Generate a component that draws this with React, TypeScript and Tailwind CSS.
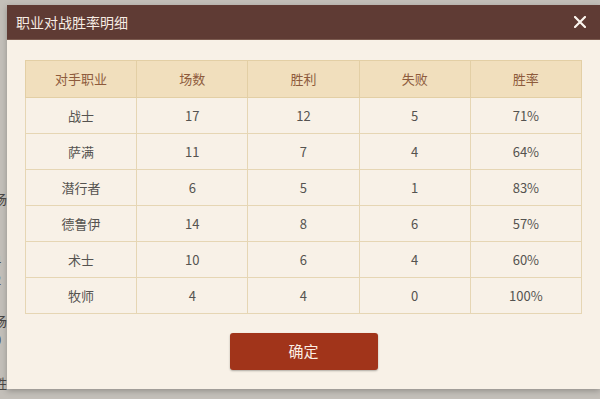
import React from "react";

const rows = [
  { name: "战士", total: 17, win: 12, lose: 5, rate: "71%" },
  { name: "萨满", total: 11, win: 7, lose: 4, rate: "64%" },
  { name: "潜行者", total: 6, win: 5, lose: 1, rate: "83%" },
  { name: "德鲁伊", total: 14, win: 8, lose: 6, rate: "57%" },
  { name: "术士", total: 10, win: 6, lose: 4, rate: "60%" },
  { name: "牧师", total: 4, win: 4, lose: 0, rate: "100%" },
];

const headers = ["对手职业", "场数", "胜利", "失败", "胜率"];

export default function App() {
  return (
    <div
      className="relative w-[600px] h-[399px] overflow-hidden bg-[#c3bfb9]"
      style={{ fontFamily: '"Noto Sans CJK SC", "Noto Sans", sans-serif' }}
    >
      {/* page behind the overlay */}
      <div className="flex flex-col pt-[150px] pl-0 text-[13px] text-[#4a4744] leading-[19px] -ml-[6px]">
        <span>-</span>
        <span className="mt-[20px]">场</span>
        <span>:</span>
        <span className="mt-[24px]">4</span>
        <span>2</span>
        <span className="mt-[22px]">场</span>
        <span>0</span>
        <span className="mt-[24px]">胜</span>
      </div>

      {/* modal */}
      <div className="absolute left-[7px] top-[5px] w-[593px] h-[384px] flex flex-col bg-[#f8f1e7] shadow-[0_2px_6px_rgba(0,0,0,0.25)]">
        <div className="h-[35px] shrink-0 flex items-center justify-between bg-[#5f3b34] pl-[9px] pr-[14px] border-b border-[#7b5a4f]">
          <span className="text-[14px] text-[#f6ece3]">职业对战胜率明细</span>
          <svg width="12" height="12" viewBox="0 0 12 12">
            <path d="M1 1L11 11M11 1L1 11" stroke="#fbf5ef" strokeWidth="2.2" strokeLinecap="round" />
          </svg>
        </div>

        <div className="flex flex-col items-center px-[18px] pt-[20px]">
          <table className="w-full border-collapse table-fixed text-[13px]">
            <thead>
              <tr className="h-[37px] bg-[#f1dfbd]">
                {headers.map((h) => (
                  <th key={h} className="font-normal text-[#8e5b3c] border border-[#e3cfa5]">
                    {h}
                  </th>
                ))}
              </tr>
            </thead>
            <tbody>
              {rows.map((r) => (
                <tr key={r.name} className="h-[36px] text-[#555350]">
                  <td className="text-center border border-[#e6d6b4]">{r.name}</td>
                  <td className="text-center border border-[#e6d6b4]">{r.total}</td>
                  <td className="text-center border border-[#e6d6b4]">{r.win}</td>
                  <td className="text-center border border-[#e6d6b4]">{r.lose}</td>
                  <td className="text-center border border-[#e6d6b4]">{r.rate}</td>
                </tr>
              ))}
            </tbody>
          </table>

          <button className="mt-[19px] w-[148px] h-[37px] rounded-[3px] bg-[#a1341a] text-[15px] text-[#fbeee4] shadow-[0_1px_2px_rgba(0,0,0,0.3)]">
            确定
          </button>
        </div>
      </div>
    </div>
  );
}
